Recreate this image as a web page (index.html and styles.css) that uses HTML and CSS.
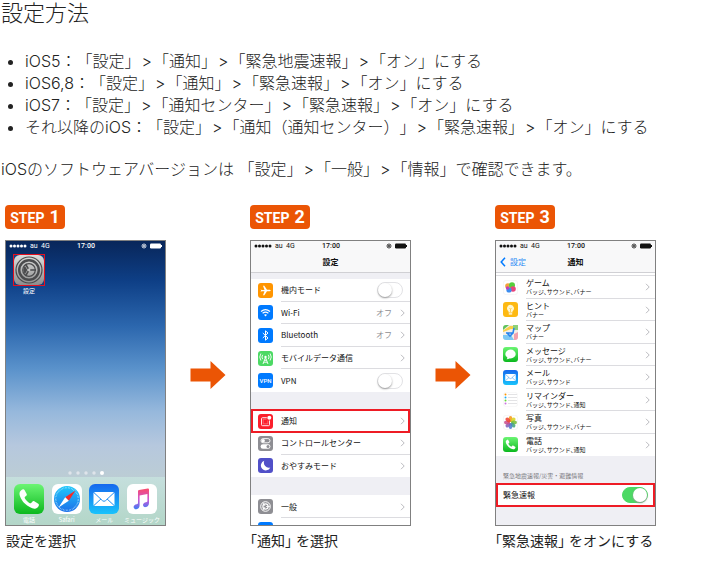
FILE: index.html
```html
<!DOCTYPE html>
<html lang="ja">
<head>
<meta charset="utf-8">
<meta name="viewport" content="width=device-width, initial-scale=1">
<title>設定方法</title>
<link rel="stylesheet" href="styles.css">
</head>
<body>
<svg class="defs" aria-hidden="true">
  <defs>
    <linearGradient id="green" x1="0" y1="0" x2="0" y2="1"><stop offset="0" stop-color="#6bf573"/><stop offset="1" stop-color="#0bb81e"/></linearGradient>
    <linearGradient id="blue" x1="0" y1="0" x2="0" y2="1"><stop offset="0" stop-color="#1668ee"/><stop offset="1" stop-color="#19c3fb"/></linearGradient>
    <linearGradient id="safari" x1="0" y1="0" x2="0" y2="1"><stop offset="0" stop-color="#1fc8fa"/><stop offset="1" stop-color="#1c70ea"/></linearGradient>
    <linearGradient id="steel" x1="0" y1="0" x2="0" y2="1"><stop offset="0" stop-color="#dcdddc"/><stop offset="1" stop-color="#8c8d8e"/></linearGradient>
    <linearGradient id="note" x1="0" y1="0" x2="0" y2="1"><stop offset="0" stop-color="#fb4b6a"/><stop offset=".55" stop-color="#c956d8"/><stop offset="1" stop-color="#3d7df5"/></linearGradient>
    <symbol id="i-phone" viewBox="0 0 30 30"><rect width="30" height="30" rx="6" fill="url(#green)"/><path d="M9 5.3c-1.6.5-3.300 2-3.500 4-.2 3 2.400 7.400 5.300 10.300 3.100 3 7.400 5.400 10.300 5.100 1.900-.2 3.400-1.900 3.800-3.400.2-.7 0-1.200-.6-1.600l-4-2.500c-.7-.4-1.300-.3-1.800.3l-1.300 1.500c-.4.400-.9.500-1.400.2-2-1.200-3.800-3-5-5-.3-.5-.2-1 .2-1.400l1.300-1.100c.6-.5.700-1.100.4-1.800l-2.200-4c-.4-.6-.9-.8-1.500-.6z" fill="#fff"/></symbol>
    <symbol id="i-mail" viewBox="0 0 30 30"><rect width="30" height="30" rx="6" fill="url(#blue)"/><rect x="4.500" y="8" width="21" height="14" rx="1.500" fill="#fff"/><path d="M5 8.700l8.500 8q1.500 1.200 3 0l8.500-8M5 21.400l7-6.500M25 21.400l-7-6.500" fill="none" stroke="#1c8df3" stroke-width="1"/></symbol>
    <symbol id="i-chevron" viewBox="0 0 5 8"><path d="M1 .8L4.200 4 1 7.200" fill="none" stroke="#bcbcc0" stroke-width="1"/></symbol>
    <symbol id="i-signal" viewBox="0 0 18 4"><g fill="currentColor"><circle cx="2" cy="2" r="1.500"/><circle cx="5.500" cy="2" r="1.500"/><circle cx="9" cy="2" r="1.500"/><circle cx="12.500" cy="2" r="1.500"/><circle cx="16" cy="2" r="1.500"/></g></symbol>
    <symbol id="i-battery" viewBox="0 0 21 6"><circle cx="3" cy="3" r="2" fill="none" stroke="currentColor" stroke-width=".8"/><circle cx="3" cy="3" r=".9" fill="currentColor"/><rect x="9" y=".5" width="11" height="5" rx="1.200" fill="currentColor"/><rect x="20" y="2" width="1" height="2" fill="currentColor"/></symbol>
    <symbol id="i-arrow" viewBox="0 0 35 28"><path d="M0 7.500h20V0l15 14-15 14v-7.500H0z" fill="#eb5505"/></symbol>
  </defs>
</svg>

<main class="guide">
  <h2 class="guide-title">設定方法</h2>
  <ul class="paths">
    <li>iOS5：「設定」<span class="gt">&gt;</span>「通知」<span class="gt">&gt;</span>「緊急地震速報」<span class="gt">&gt;</span>「オン」にする</li>
    <li>iOS6,8：「設定」<span class="gt">&gt;</span>「通知」<span class="gt">&gt;</span>「緊急速報」<span class="gt">&gt;</span>「オン」にする</li>
    <li>iOS7：「設定」<span class="gt">&gt;</span>「通知センター」<span class="gt">&gt;</span>「緊急速報」<span class="gt">&gt;</span>「オン」にする</li>
    <li>それ以降のiOS：「設定」<span class="gt">&gt;</span>「通知（通知センター）」<span class="gt">&gt;</span>「緊急速報」<span class="gt">&gt;</span>「オン」にする</li>
  </ul>
  <p class="note">iOSのソフトウェアバージョンは 「設定」<span class="gt">&gt;</span>「一般」<span class="gt">&gt;</span>「情報」で確認できます。</p>

  <div class="steps">
    <section class="step">
      <h3 class="badge">STEP <span class="num">1</span></h3>
      <div class="phone home">
        <div class="status"><svg class="signal"><use href="#i-signal"/></svg><span>au</span><span>4G</span><span class="time">17:00</span><svg class="battery"><use href="#i-battery"/></svg></div>
        <a class="app settings" href="#settings">
          <svg class="app-icon framed" viewBox="0 0 32 32"><rect width="32" height="32" fill="#17407f"/><rect x="1" y="1" width="30" height="30" rx="6" fill="url(#steel)"/><g fill="none" stroke="#4a4b4d"><circle cx="16" cy="16" r="13" stroke-width="1.200"/><circle cx="16" cy="16" r="9.800" stroke-width="2.400"/><circle cx="16" cy="16" r="6.300" stroke-width="1.200"/><path d="M17 16h6M15.500 15.200L12.500 10M15.500 16.800L12.500 22" stroke-width="1.600"/></g><path d="M14.300 16L12 12a5.500 5.500 0 0 0 0 8z" fill="#4a4b4d"/><circle cx="16" cy="16" r="1.400" fill="#c4c4c4"/><rect x=".5" y=".5" width="31" height="31" fill="none" stroke="#e60f1e"/></svg>
          <span>設定</span>
        </a>
        <svg class="pages" viewBox="0 0 36 4"><g fill="#dfe4ea"><circle cx="2" cy="2" r="1.700"/><circle cx="10" cy="2" r="1.700"/><circle cx="18" cy="2" r="1.700"/><circle cx="26" cy="2" r="1.700"/></g><circle cx="34" cy="2" r="2" fill="#fff"/></svg>
        <nav class="dock" aria-label="Dock">
          <a class="app" href="#phone"><svg class="app-icon"><use href="#i-phone"/></svg><span>電話</span></a>
          <a class="app" href="#safari"><svg class="app-icon" viewBox="0 0 30 30"><rect width="30" height="30" rx="6" fill="#fff"/><circle cx="15" cy="15" r="13" fill="url(#safari)"/><circle cx="15" cy="15" r="11.300" fill="none" stroke="#b9e6fb" stroke-width="1.400" stroke-dasharray=".5 1"/><path d="M23.500 6.500L13.200 13.200l3.600 3.600z" fill="#f52a26"/><path d="M6.500 23.500l6.700-10.300 3.600 3.600z" fill="#fff"/></svg><span>Safari</span></a>
          <a class="app" href="#mail"><svg class="app-icon"><use href="#i-mail"/></svg><span>メール</span></a>
          <a class="app" href="#music"><svg class="app-icon" viewBox="0 0 30 30"><rect width="30" height="30" rx="6" fill="#fff"/><path d="M11 7.200c0-.7.300-1 1-1.200l8.800-1.500c.7-.1 1.200.2 1.200.9V19c0 2.300-1.300 3.800-3.300 4.100-1.500.2-2.700-.7-2.700-2 0-1.700 1.300-2.500 3-2.800 1-.2 1.400-.5 1.400-1.300V10l-7.800 1.400v9.800c0 2.200-1.200 3.700-3.200 4-1.600.2-2.800-.7-2.800-2.100 0-1.600 1.300-2.500 3-2.800 1-.2 1.400-.5 1.400-1.300z" fill="url(#note)"/></svg><span>ミュージック</span></a>
        </nav>
      </div>
      <p class="caption lead">設定を選択</p>
    </section>

    <svg class="arrow" aria-hidden="true"><use href="#i-arrow"/></svg>

    <section class="step">
      <h3 class="badge">STEP <span class="num">2</span></h3>
      <div class="phone">
        <div class="status"><svg class="signal"><use href="#i-signal"/></svg><span>au</span><span>4G</span><span class="time">17:00</span><svg class="battery"><use href="#i-battery"/></svg></div>
        <h4 class="bar">設定</h4>
        <div class="gap small"></div>
        <ul class="list five">
          <li class="row"><svg class="icon" viewBox="0 0 15 15"><rect width="15" height="15" rx="3" fill="#ff9500"/><path d="M2.500 6.600L4 7h2.500L5 2.800h1.300L9 6.800h2.500c1.600 0 1.600 1.400 0 1.400H9l-2.700 4H5l1.500-4H4l-1.500.6.7-1.200z" fill="#fff"/></svg><label for="plane">機内モード</label><input class="switch" type="checkbox" id="plane"></li>
          <li class="row"><svg class="icon" viewBox="0 0 15 15"><rect width="15" height="15" rx="3" fill="#007aff"/><path d="M3 6.500q4.500-3.800 9 0M4.600 8.300q2.900-2.300 5.800 0" fill="none" stroke="#fff" stroke-width="1.200"/><path d="M6 9.800q1.500-1.100 3 0L7.500 11.400z" fill="#fff"/></svg><span>Wi-Fi</span><span class="value">オフ</span><svg class="chev"><use href="#i-chevron"/></svg></li>
          <li class="row"><svg class="icon" viewBox="0 0 15 15"><rect width="15" height="15" rx="3" fill="#007aff"/><path d="M4.800 5l5.200 5-2.500 2.200V2.800L10 5l-5.200 5" fill="none" stroke="#fff" stroke-width="1"/></svg><span>Bluetooth</span><span class="value">オフ</span><svg class="chev"><use href="#i-chevron"/></svg></li>
          <li class="row"><svg class="icon" viewBox="0 0 15 15"><rect width="15" height="15" rx="3" fill="#4cd964"/><path d="M7.500 6.500L5 13M7.500 6.500L10 13M5.700 11.200h3.600M6.400 9.300h2.200M4.700 3.800q-1.600 2.200 0 4.400M10.300 3.800q1.600 2.200 0 4.400M2.900 2.500q-2.300 3.500 0 7M12.100 2.500q2.300 3.500 0 7" fill="none" stroke="#fff" stroke-width=".9"/><circle cx="7.500" cy="6" r="1.200" fill="#fff"/></svg><span>モバイルデータ通信</span><svg class="chev"><use href="#i-chevron"/></svg></li>
          <li class="row"><span class="icon vpn" aria-hidden="true">VPN</span><label for="vpn">VPN</label><input class="switch" type="checkbox" id="vpn"></li>
        </ul>
        <div class="gap"></div>
        <ul class="list three">
          <li class="row marked"><svg class="icon" viewBox="0 0 15 15"><rect width="15" height="15" rx="3" fill="#fb1f2c"/><path d="M8.800 3.700H4.500q-1 0-1 1v6q0 1 1 1h6q1 0 1-1V6.500" fill="none" stroke="#fff" stroke-width=".9"/><path d="M8.500 5.200H5.200v4.600h4.600V6.500" fill="none" stroke="#ffa5aa" stroke-width=".5"/><circle cx="11.300" cy="3.800" r="2" fill="#fff"/></svg><span>通知</span><svg class="chev"><use href="#i-chevron"/></svg></li>
          <li class="row"><svg class="icon" viewBox="0 0 15 15"><rect width="15" height="15" rx="3" fill="#8e8e93"/><rect x="3" y="2.600" width="9" height="4.200" rx="2.100" fill="none" stroke="#fff" stroke-width=".9"/><circle cx="5.200" cy="4.700" r="1.700" fill="#fff"/><rect x="2.600" y="8.200" width="9.800" height="4.600" rx="2.300" fill="#fff"/><circle cx="10" cy="10.500" r="1.500" fill="#8e8e93"/></svg><span>コントロールセンター</span><svg class="chev"><use href="#i-chevron"/></svg></li>
          <li class="row"><svg class="icon" viewBox="0 0 15 15"><rect width="15" height="15" rx="3" fill="#5150c8"/><path d="M6.300 2.800a4.900 4.900 0 1 0 6 6.600A4.900 4.900 0 0 1 6.300 2.800z" fill="#fff"/></svg><span>おやすみモード</span><svg class="chev"><use href="#i-chevron"/></svg></li>
        </ul>
        <div class="gap"></div>
        <ul class="list peek">
          <li class="row"><svg class="icon" viewBox="0 0 15 15"><rect width="15" height="15" rx="3" fill="#8e8e93"/><g fill="none" stroke="#fff"><circle cx="7.500" cy="7.500" r="4.800" stroke-width="1"/><circle cx="7.500" cy="7.500" r="2.600" stroke-width="1.200"/><path d="M8 7.500h4M7 7l-2-3.500M7 8l-2 3.500" stroke-width=".8"/></g></svg><span>一般</span><svg class="chev"><use href="#i-chevron"/></svg></li>
          <li class="row"><svg class="icon" viewBox="0 0 15 15"><rect width="15" height="15" rx="3" fill="#007aff"/></svg></li>
        </ul>
      </div>
      <p class="caption"><span class="quote">「通知」</span>を選択</p>
    </section>

    <svg class="arrow" aria-hidden="true"><use href="#i-arrow"/></svg>

    <section class="step">
      <h3 class="badge">STEP <span class="num">3</span></h3>
      <div class="phone">
        <div class="status"><svg class="signal"><use href="#i-signal"/></svg><span>au</span><span>4G</span><span class="time">17:00</span><svg class="battery"><use href="#i-battery"/></svg></div>
        <div class="bar"><a class="back" href="#settings"><svg viewBox="0 0 6 10"><path d="M5 .8L1.200 5 5 9.200" fill="none" stroke="#007aff" stroke-width="1.500"/></svg>設定</a><h4 class="bar-title">通知</h4></div>
        <div class="sliver"></div>
        <ul class="list eight">
          <li class="row"><svg class="icon" viewBox="0 0 15 15"><rect x=".3" y=".3" width="14.400" height="14.400" rx="3" fill="#fff" stroke="#eee" stroke-width=".6"/><circle cx="5" cy="6" r="2.800" fill="#f2a23a"/><circle cx="9" cy="5.200" r="3" fill="#54cf3c"/><circle cx="10" cy="9" r="2.800" fill="#e8447c"/><circle cx="6" cy="10" r="2.600" fill="#3c8df0"/><circle cx="4.500" cy="8" r="1.700" fill="#c341b5"/></svg><span class="two">ゲーム<small>バッジ、サウンド、バナー</small></span><svg class="chev"><use href="#i-chevron"/></svg></li>
          <li class="row"><svg class="icon" viewBox="0 0 15 15"><rect width="15" height="15" rx="3" fill="#fdb913"/><path d="M7.500 2.800a3.600 3.600 0 0 0-2 6.500v1.200h4V9.300a3.600 3.600 0 0 0-2-6.500z" fill="#fff7cf"/><path d="M5.800 11.300h3.400v1.200H5.800z" fill="#fff"/><path d="M7.500 10V7.500L6.500 6M7.500 7.500L8.500 6" stroke="#fdb913" stroke-width=".6" fill="none"/></svg><span class="two">ヒント<small>バナー</small></span><svg class="chev"><use href="#i-chevron"/></svg></li>
          <li class="row"><svg class="icon" viewBox="0 0 15 15"><rect width="15" height="15" rx="3" fill="#f3efe6"/><path d="M0 5V3a3 3 0 0 1 3-3h3L0 5z" fill="#60c35a"/><path d="M0 5.500L7 1h8v3H8L0 7z" fill="#f8d04a"/><path d="M10 0h5v5h-5z" fill="#8dd17a"/><path d="M0 10h8l3 5H3a3 3 0 0 1-3-3z" fill="#7dc8f3"/><path d="M11 15V9l4-2v5a3 3 0 0 1-3 3z" fill="#f3a0ad"/><path d="M3 8h7l1-5M4 8l3 3 3-3" fill="none" stroke="#2784ee" stroke-width="1.600"/></svg><span class="two">マップ<small>バナー</small></span><svg class="chev"><use href="#i-chevron"/></svg></li>
          <li class="row"><svg class="icon" viewBox="0 0 15 15"><rect width="15" height="15" rx="3" fill="url(#green)"/><ellipse cx="7.500" cy="7" rx="5.200" ry="4.400" fill="#fff"/><path d="M4.500 9.500q.2 2-1 2.800 2 0 3.300-1.300z" fill="#fff"/></svg><span class="two">メッセージ<small>バッジ、サウンド、バナー</small></span><svg class="chev"><use href="#i-chevron"/></svg></li>
          <li class="row"><svg class="icon"><use href="#i-mail"/></svg><span class="two">メール<small>バッジ、サウンド</small></span><svg class="chev"><use href="#i-chevron"/></svg></li>
          <li class="row"><svg class="icon" viewBox="0 0 15 15"><rect x=".3" y=".3" width="14.400" height="14.400" rx="3" fill="#fff" stroke="#f1f1f1" stroke-width=".6"/><path d="M5 2.500h9M5 5.500h9M5 8.500h9M5 11.500h9" stroke="#d0d0d4" stroke-width=".6"/><circle cx="2.500" cy="2.500" r="1" fill="#ff9500"/><circle cx="2.500" cy="5.500" r="1" fill="#1badf8"/><circle cx="2.500" cy="8.500" r="1" fill="#63da38"/><circle cx="2.500" cy="11.500" r="1" fill="#cc73e1"/></svg><span class="two">リマインダー<small>バッジ、サウンド、通知</small></span><svg class="chev"><use href="#i-chevron"/></svg></li>
          <li class="row"><svg class="icon" viewBox="0 0 15 15"><rect x=".3" y=".3" width="14.400" height="14.400" rx="3" fill="#fff" stroke="#eee" stroke-width=".6"/><g fill-opacity=".88"><ellipse cx="7.500" cy="4" rx="1.900" ry="2.900" fill="#f79a1d"/><ellipse cx="7.500" cy="4" rx="1.900" ry="2.900" fill="#d9d424" transform="rotate(45 7.500 7.500)"/><ellipse cx="7.500" cy="4" rx="1.900" ry="2.900" fill="#78bd3b" transform="rotate(90 7.500 7.500)"/><ellipse cx="7.500" cy="4" rx="1.900" ry="2.900" fill="#43a67e" transform="rotate(135 7.500 7.500)"/><ellipse cx="7.500" cy="4" rx="1.900" ry="2.900" fill="#4d7fd0" transform="rotate(180 7.500 7.500)"/><ellipse cx="7.500" cy="4" rx="1.900" ry="2.900" fill="#8561b8" transform="rotate(225 7.500 7.500)"/><ellipse cx="7.500" cy="4" rx="1.900" ry="2.900" fill="#c8508e" transform="rotate(270 7.500 7.500)"/><ellipse cx="7.500" cy="4" rx="1.900" ry="2.900" fill="#ee4435" transform="rotate(315 7.500 7.500)"/></g></svg><span class="two">写真<small>バッジ、サウンド、バナー</small></span><svg class="chev"><use href="#i-chevron"/></svg></li>
          <li class="row"><svg class="icon"><use href="#i-phone"/></svg><span class="two">電話<small>バッジ、サウンド、通知</small></span><svg class="chev"><use href="#i-chevron"/></svg></li>
        </ul>
        <p class="group-label">緊急地震速報/災害・避難情報</p>
        <div class="row alert marked"><label for="alert">緊急速報</label><input class="switch" type="checkbox" id="alert" checked></div>
      </div>
      <p class="caption"><span class="quote">「緊急速報」</span>をオンにする</p>
    </section>
  </div>
</main>
</body>
</html>
```
FILE: styles.css
```css
* { box-sizing: border-box; }

body {
  margin: 0;
  background: #fff;
  color: #222;
  font: 300 16px/22px Inter, "Noto Sans CJK JP", sans-serif;
  text-spacing-trim: space-all;
}

h2, h3, h4, p, ul { margin: 0; padding: 0; font-weight: inherit; }
a { color: inherit; text-decoration: none; }
svg { display: block; flex: none; }
.defs { position: absolute; width: 0; height: 0; }

.guide { padding: 0 1px; }
.guide-title { font-size: 22px; line-height: 26px; }
.paths { margin-top: 24px; padding-left: 24px; }
.gt { padding: 0 1px; }
.note { margin-top: 20px; }

/* Steps */
.steps {
  display: flex;
  align-items: flex-start;
  gap: 24px;
  margin-top: 25px;
  padding-left: 4px;
}
.step { flex: none; width: 161px; }
.arrow { width: 36px; height: 28px; margin-top: 156px; }
.badge {
  display: flex;
  align-items: baseline;
  justify-content: center;
  gap: 5px;
  width: 60px;
  height: 24px;
  border-radius: 4px;
  background: #eb5505;
  color: #fff;
  font: 700 14px/24px Roboto, sans-serif;
}
.num { font-size: 18px; }
.caption {
  color: #222;
  font-size: 14px;
  font-weight: 400;
  line-height: 20px;
  margin-top: 5px;
  white-space: nowrap;
}
.caption.lead { padding-left: 1px; }
.quote { font-feature-settings: "halt"; margin-right: 4px; }

/* Phone screen */
.phone {
  display: flex;
  flex-direction: column;
  height: 286px;
  margin-top: 11px;
  border: 1px solid #808080;
  background: #efeff4;
  color: #111;
  font-family: "Noto Sans CJK JP", sans-serif;
  font-size: 8px;
  font-weight: 400;
  line-height: 10px;
  overflow: hidden;
}
.status {
  display: grid;
  grid-template-columns: 18px 8px 32px 20px 1fr;
  align-items: center;
  column-gap: 3px;
  flex: none;
  height: 10px;
  padding: 0 3px;
  background: #f8f8f9;
  font: 400 7px/10px Roboto, sans-serif;
}
.signal { width: 18px; height: 4px; }
.time { font-weight: 500; text-align: center; }
.battery { width: 21px; height: 6px; justify-self: end; }
.bar {
  position: relative;
  flex: none;
  height: 22px;
  border-bottom: 1px solid #d0d0d4;
  background: #f8f8f9;
  font-size: 8px;
  font-weight: 700;
  line-height: 21px;
  text-align: center;
}
.back {
  position: absolute;
  left: 4px;
  display: flex;
  align-items: center;
  gap: 4px;
  color: #2f8df5;
  font-weight: 400;
}
.back svg { width: 6px; height: 10px; }
.gap { flex: none; height: 18px; }
.gap.small { height: 6px; }
.sliver { flex: none; height: 3px; border-bottom: 1px solid #dcdce0; background: #fff; }

.list {
  display: grid;
  grid-auto-rows: 1fr;
  flex: none;
  list-style: none;
  background: #fff;
}
.five { height: 113px; }
.three { height: 67px; }
.peek { height: 46px; }
.eight { height: 180px; }
.row {
  display: flex;
  align-items: center;
  gap: 8px;
  padding: 0 5px 0 7px;
  background: linear-gradient(#dcdce0, #dcdce0) 30px 100% / 100% 1px no-repeat;
}
.row:last-child { background: none; }
.icon { width: 15px; height: 15px; }
.vpn {
  border-radius: 3px;
  background: #007aff;
  color: #fff;
  font: 500 6px/15px Roboto, sans-serif;
  text-align: center;
}
.chev { width: 5px; height: 8px; margin-left: auto; }
.value { margin-left: auto; color: #8e8e93; }
.value + .chev { margin-left: 0; }
.two { display: flex; flex-direction: column; line-height: 9px; }
.two small { font-size: 6px; line-height: 9px; font-feature-settings: "halt"; }
.row.marked { background: #fff; outline: 2px solid #ee1c25; outline-offset: -1px; }
.three .marked { margin: 0 1px; padding: 0 4px 0 6px; }
.group-label { padding: 16px 7px 3px; color: #77777c; font-size: 6px; line-height: 8px; }
.row.alert { flex: none; height: 22px; margin: 1px 1px 0; padding: 0 6px; }

.switch {
  appearance: none;
  display: flex;
  width: 26px;
  height: 16px;
  margin: 0 0 0 auto;
  border: 1px solid #e2e2e5;
  border-radius: 8px;
  background: #fff;
}
.row > .switch:not(:checked) { margin-right: 2px; }
.switch::before {
  content: "";
  width: 14px;
  height: 14px;
  border-radius: 50%;
  background: #fff;
  box-shadow: 0 1px 2px #999;
}
.switch:checked { justify-content: flex-end; border-color: #4cd964; background: #4cd964; }

/* Home screen */
.home {
  background: linear-gradient(#08265a, #0e3f86 14%, #2c67ae 30%, #5a92cb 45%, #96b8dc 60%, #b6c8de 72%, #bccdd4 84%);
  color: #fff;
}
.home .status { background: none; }
.app {
  display: flex;
  flex-direction: column;
  align-items: center;
  width: 30px;
  font-size: 6px;
  line-height: 8px;
  white-space: nowrap;
}
.app-icon { width: 30px; height: 30px; }
.framed { width: 32px; height: 32px; }
.settings { width: 32px; margin: 3px 0 0 7px; gap: 1px; }
.pages { width: 36px; height: 4px; margin: auto auto 2px; }
.dock {
  display: flex;
  flex: none;
  justify-content: space-between;
  height: 48px;
  padding: 7px 8px 0;
  background: linear-gradient(#c5dfdd, #b3d6c8);
}
.dock .app { gap: 2px; }
```
